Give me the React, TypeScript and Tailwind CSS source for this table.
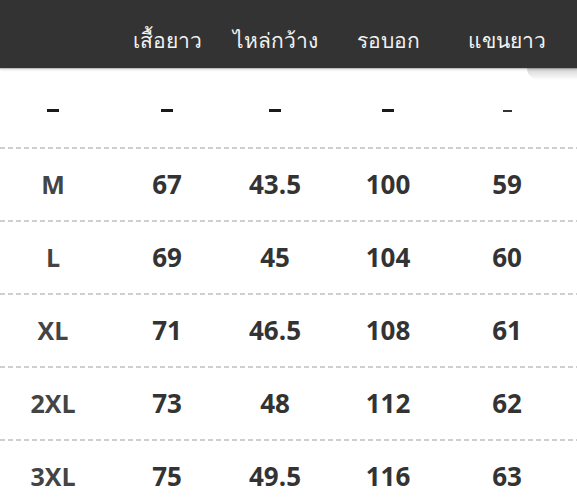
import React from 'react';

const cols = 'grid grid-cols-[106px_122px_94px_132px_106px]';

const heads = ['เสื้อยาว', 'ไหล่กว้าง', 'รอบอก', 'แขนยาว'];

const rows = [
  ['M', '67', '43.5', '100', '59'],
  ['L', '69', '45', '104', '60'],
  ['XL', '71', '46.5', '108', '61'],
  ['2XL', '73', '48', '112', '62'],
  ['3XL', '75', '49.5', '116', '63'],
];

function Dashed() {
  return <div className="h-[2px] w-full bg-[repeating-linear-gradient(90deg,#cfcfcf_0_5px,transparent_5px_8px)]" />;
}

export default function App() {
  return (
    <div className="w-[577px] h-[499px] overflow-hidden bg-white relative" style={{ fontFamily: '"Open Sans", "Noto Sans", sans-serif' }}>
      <div className="h-[69px] bg-[#333333] border-b border-[#bdbdbd] shadow-[0_1px_2px_rgba(0,0,0,0.12)]">
        <div className={`${cols} h-full items-center pt-[13px]`}>
          <div />
          {heads.map((h) => (
            <div key={h} className="text-center text-[21px] text-[#f2f2f2]">
              {h}
            </div>
          ))}
        </div>
      </div>
      {/* curl shadow at right */}
      <div className="absolute right-0 top-[68px] h-[12px] w-[50px] bg-[linear-gradient(180deg,rgba(0,0,0,0.18),rgba(0,0,0,0))] rounded-bl-[40px]" />

      <div className={`${cols} h-[78px] items-center`}>
        {[0, 1, 2, 3].map((i) => (
          <div key={i} className="flex justify-center pt-[4px]">
            <span className="block w-3 h-[3px] bg-[#1a1a1a]" />
          </div>
        ))}
        <div className="flex justify-center pt-[6px]">
          <span className="block w-[9px] h-[2px] bg-[#333]" />
        </div>
      </div>

      {rows.map((r) => (
        <div key={r[0]}>
          <Dashed />
          <div className={`${cols} h-[71px] items-center`}>
            {r.map((v, i) => (
              <div
                key={i}
                className={`text-center font-bold ${i === 0 ? 'text-[25px] text-[#444]' : 'text-[26px] text-[#333]'}`}
              >
                {v}
              </div>
            ))}
          </div>
        </div>
      ))}
    </div>
  );
}
